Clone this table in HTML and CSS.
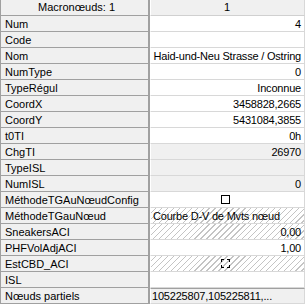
FILE: index.html
```html
<!DOCTYPE html>
<html lang="fr">
<head>
    <meta charset="UTF-8">
    <title>Macronœuds - Propriétés</title>
    <link rel="stylesheet" href="styles.css">
</head>
<body>

    <div class="props">
        <div class="label head">Macronœuds: 1</div>
        <div class="value head">1</div>

        <div class="label">Num</div>
        <div class="value right">4</div>

        <div class="label">Code</div>
        <div class="value"></div>

        <div class="label">Nom</div>
        <div class="value right">Haid-und-Neu Strasse / Ostring</div>

        <div class="label">NumType</div>
        <div class="value right">0</div>

        <div class="label">TypeRégul</div>
        <div class="value right">Inconnue</div>

        <div class="label">CoordX</div>
        <div class="value right">3458828,2665</div>

        <div class="label">CoordY</div>
        <div class="value right">5431084,3855</div>

        <div class="label">t0TI</div>
        <div class="value right">0h</div>

        <div class="label">ChgTI</div>
        <div class="value right readonly">26970</div>

        <div class="label">TypeISL</div>
        <div class="value readonly"></div>

        <div class="label">NumISL</div>
        <div class="value right readonly">0</div>

        <div class="label">MéthodeTGAuNœudConfig</div>
        <div class="value center"><span class="box"></span></div>

        <div class="label">MéthodeTGauNœud</div>
        <div class="value hatch">Courbe D-V de Mvts nœud</div>

        <div class="label">SneakersACI</div>
        <div class="value right hatch">0,00</div>

        <div class="label">PHFVolAdjACI</div>
        <div class="value right">1,00</div>

        <div class="label">EstCBD_ACI</div>
        <div class="value center hatch"><span class="box dotted"></span></div>

        <div class="label">ISL</div>
        <div class="value"></div>

        <div class="label">Nœuds partiels</div>
        <div class="value readonly last">105225807,105225811,...</div>
    </div>

</body>
</html>
```

FILE: styles.css
```css
body {
    margin: 0;
    background: #fff;
    font-family: "Liberation Sans", Arial, sans-serif;
    font-size: 11px;
    color: #000;
}

.props {
    display: grid;
    grid-template-columns: 149px 1fr;
    grid-auto-rows: 16px;
    width: 305px;
    border-left: 1px solid #a0a0a0;
    box-sizing: border-box;
}

.label, .value {
    box-sizing: border-box;
    height: 16px;
    line-height: 16px;
    white-space: nowrap;
    overflow: hidden;
}

.label {
    background: #f0f0f0;
    padding-left: 4px;
    border-bottom: 1px solid #a0a0a0;
    border-right: 2px solid #a0a0a0;
}

.value {
    background: #fff;
    border-bottom: 1px solid #d8d8d8;
    border-left: 1px solid #fff;
    border-right: 1px solid #d8d8d8;
    padding: 0 3px 0 2px;
    letter-spacing: -0.2px;
}

.head {
    text-align: center;
    background: #f0f0f0;
    line-height: 15px;
}

.value.head {
    border-bottom-color: #d0d0d0;
}

.right {
    text-align: right;
}

.center {
    display: flex;
    align-items: center;
    justify-content: center;
    padding-right: 7px;
}

.readonly {
    background: #f0f0f0;
}

.last {
    border-top: 1px solid #a0a0a0;
    line-height: 15px;
    padding-left: 1px;
}

/* diagonal stripes for values that can't be edited here */
.hatch {
    background: repeating-linear-gradient(135deg, #fff 0, #fff 3.2px, #c4c4c4 3.2px, #c4c4c4 4.2px);
}

.box {
    width: 9px;
    height: 9px;
    box-sizing: border-box;
    border: 1px solid #000;
    background: #fff;
}

.box.dotted {
    border: 1px dashed #000;
    background: transparent;
}
```
